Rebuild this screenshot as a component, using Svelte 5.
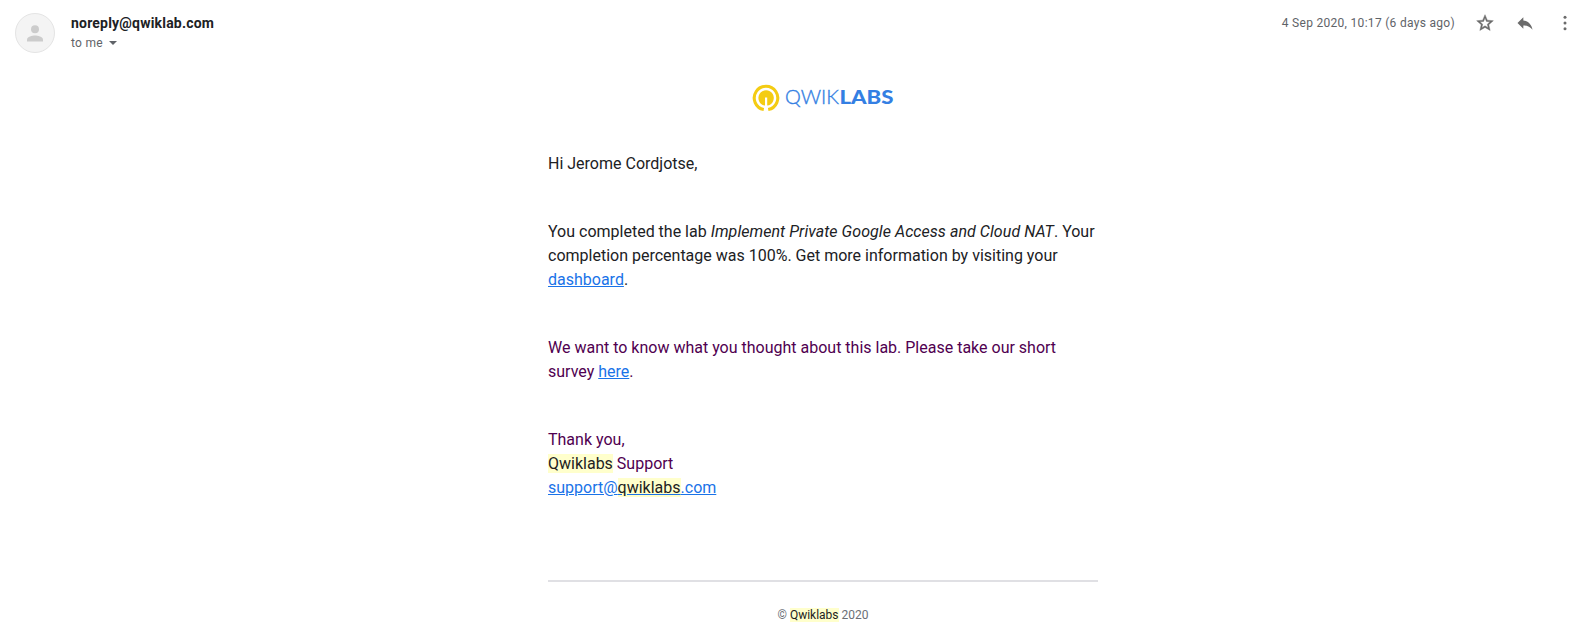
<script>
  const sender = 'noreply@qwiklab.com';
</script>

<div class="message">
  <header>
    <div class="avatar">
      <svg viewBox="0 0 24 24" width="24" height="24">
        <circle cx="12" cy="8.200" r="4" />
        <path d="M4 20.500v-2c0-2.670 5.330-4 8-4s8 1.330 8 4v2z" />
      </svg>
    </div>
    <div class="who">
      <div class="name">{sender}</div>
      <div class="to">to me <span class="caret"></span></div>
    </div>
    <div class="date">4 Sep 2020, 10:17 (6 days ago)</div>
    <div class="actions">
      <svg class="star" viewBox="0 0 24 24" width="20" height="20"><path d="M22 9.240l-7.190-.62L12 2 9.190 8.630 2 9.240l5.460 4.730L5.820 21 12 17.270 18.180 21l-1.630-7.030L22 9.240zM12 15.400l-3.760 2.270 1-4.280-3.320-2.880 4.380-.38L12 6.100l1.710 4.040 4.380.38-3.320 2.880 1 4.280L12 15.400z" /></svg>
      <svg viewBox="0 0 24 24" width="20" height="20"><path d="M10 9V5l-7 7 7 7v-4.100c5 0 8.500 1.600 11 5.100-1-5-4-10-11-11z" /></svg>
      <svg viewBox="0 0 24 24" width="20" height="20"><circle cx="12" cy="5.200" r="1.800" /><circle cx="12" cy="12" r="1.800" /><circle cx="12" cy="18.800" r="1.800" /></svg>
    </div>
  </header>

  <main>
    <svg class="logo" viewBox="0 0 144 32" width="144" height="32">
      <path d="M12.800 26.540A11.750 11.750 0 1 1 17.200 26.540" fill="none" stroke="#f4cc13" stroke-width="3.100" />
      <path d="M14 22.600A7.700 7.700 0 1 1 16.200 22.600V14.500H14Z" fill="#f4cc13" />
      <text class="thin" x="34" y="20.900" textLength="54" lengthAdjust="spacingAndGlyphs">QWIK</text>
      <text class="heavy" x="88.500" y="20.900" textLength="54" lengthAdjust="spacingAndGlyphs">LABS</text>
    </svg>

    <p>Hi Jerome Cordjotse,</p>
    <p>You completed the lab <i>Implement Private Google Access and Cloud NAT</i>. Your completion percentage was 100%. Get more information by visiting your <span class="link">dashboard</span>.</p>
    <p class="quoted">We want to know what you thought about this lab. Please take our short survey <span class="link">here</span>.</p>
    <p class="quoted">Thank you,<br /><mark>Qwiklabs</mark> Support<br /><span class="link">support@<mark>qwiklabs</mark>.com</span></p>
    <footer>© <mark>Qwiklabs</mark> 2020</footer>
  </main>
</div>

<style>
  :global(body) { margin: 0; background: #fff; }
  .message { height: 633px; overflow: hidden; font-family: Roboto, sans-serif; color: #202124; }
  header { display: flex; height: 64px; box-sizing: border-box; padding: 13px 18px 0 15px; }
  .avatar { width: 38px; height: 38px; border: 1px solid #e4e4e4; border-radius: 50%; background: #f4f4f4; display: flex; align-items: center; justify-content: center; fill: #ccc; }
  .who { margin-left: 16px; flex: 1; }
  .name { font-size: 14px; font-weight: 700; line-height: 20px; letter-spacing: 0.2px; }
  .to { font-size: 12px; line-height: 20px; letter-spacing: 0.3px; color: #5f6368; display: flex; align-items: center; }
  .caret { margin-left: 6px; border: 4px solid transparent; border-top-color: #5f6368; border-bottom: 0; }
  .date { font-size: 12px; line-height: 20px; letter-spacing: 0.3px; color: #5f6368; }
  .actions { display: flex; gap: 20px; margin-left: 20px; fill: #6b6b6b; }
  .star { stroke: #6b6b6b; stroke-width: 0.5; }
  main { width: 550px; margin-left: 548px; }
  .logo { display: block; margin: 19px 0 0 203px; }
  .thin, .heavy { font-family: Lato, sans-serif; font-size: 19.5px; fill: #347fe3; }
  .thin { font-weight: 300; stroke: #347fe3; stroke-width: 0.35; }
  .heavy { font-weight: 900; }
  p { margin: 0 0 44px; font-size: 16px; line-height: 24px; }
  .logo + p { margin-top: 37px; }
  i { letter-spacing: 0.06px; }
  .quoted { color: #500050; }
  .link { color: #1a73e8; text-decoration: underline; }
  mark { background: #ffc; color: #222; }
  footer { margin-top: 80px; border-top: 2px solid #e0e0e4; padding-top: 24px; font-size: 12px; line-height: 18px; text-align: center; color: #6b6f76; }
</style>
